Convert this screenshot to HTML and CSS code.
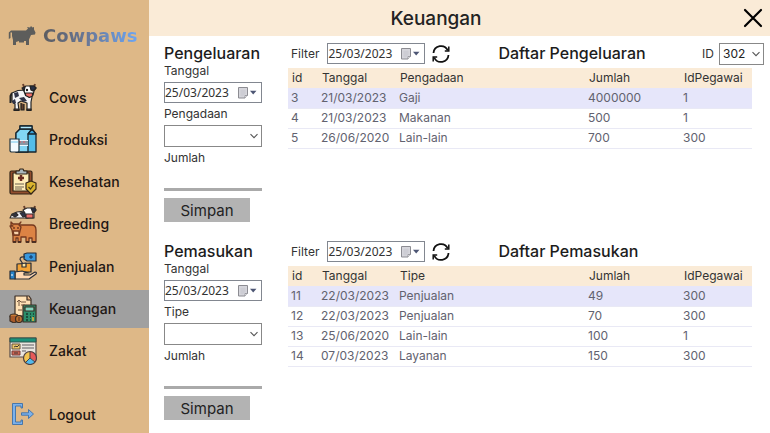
FILE: index.html
```html
<!DOCTYPE html>
<html lang="id">
<head>
<meta charset="utf-8">
<title>Cowpaws - Keuangan</title>
<link rel="stylesheet" href="styles.css">
</head>
<body>
<svg class="sprite" aria-hidden="true">
  <symbol id="chevron" viewBox="0 0 10 10"><path d="M1.5 3.2 5 6.7l3.5-3.5" fill="none" stroke="#555" stroke-width="1.1"/></symbol>
  <symbol id="calendar" viewBox="0 0 20 12"><path d="M1.500 .5h9v8l-2.500 2.500H1.500z" fill="#d6d6dc" stroke="#8c8c92"/><path d="M3 4h6M3 6h6M3 8h4M5 2.500v7M7 2.500v6" stroke="#c0c0c8" stroke-width=".5"/><path d="M10.500 8.500H8V11" fill="#fff" stroke="#8c8c92" stroke-width=".8"/><path d="M13 3.800h6.500L16.200 7.500z" fill="#4d5674"/></symbol>
  <symbol id="refresh" viewBox="0 0 18 18"><path d="M1.500 8A7.500 7.500 0 0 1 15.800 5.500M16.500 10A7.500 7.500 0 0 1 2.200 12.500" fill="none" stroke="#111" stroke-width="1.800"/><path d="M16.800 1.500v4.500h-4M1.200 16.500V12h4" fill="none" stroke="#111" stroke-width="1.500"/></symbol>
</svg>
<div class="app">
  <aside class="sidebar">
    <div class="brand">
      <svg class="brand-icon" viewBox="0 0 28 20" aria-hidden="true"><path d="M3 4.500h15l2-2-1-1.500 3 .5L23 0l1.500 1.500L26 1v2.500l1.500 3-.5 2-4 .5-2 4.500V19h-3v-4h-7l-3 1v3H5v-5l-1-4V6.500H2.500V12L.8 13V6.500z" fill="#5d5d5b"/><path d="M11 15.500h5" stroke="#5d5d5b" stroke-width="2"/></svg>
      <span class="brand-name">Cowpaws</span>
    </div>
    <nav class="nav">
      <a class="nav-item" href="#cows">
        <svg class="nav-icon" viewBox="0 0 28 28" aria-hidden="true"><g stroke="#222" stroke-width="1.200" stroke-linejoin="round"><path d="M3 10 1.500 13v7" fill="none" stroke-width="2"/><path d="M3 10 9 7.500l8-.5 6 7-1 5v8h-4v-7l-6-2-3 2 1 7H6v-6l-3-3z" fill="#f5f5f7"/><path d="M15 4l-1-3M25 4l1-3" stroke="#68412d" stroke-width="2"/><path d="M14 5l3-2h7l3 2-2 3-1 4-4 2-4-3-1-3z" fill="#fff"/><path d="M21 3h4l2 2-3 3-2-1zM13 5l3-1-1 4z" fill="#273047"/><path d="M16.500 10h7v3l-3 1.500-4-2z" fill="#ed6d68"/><path d="M5 10l4-1 1 4-4 2zM10 15l5-1 3 4-4 1zM3 18l3-2 1 4-3 1z" fill="#303448" stroke="none"/><path d="M5 26h5v1.500H5zM18 26h4v1.500h-4zM12 20v7h3v-6" fill="#60402f"/><circle cx="18" cy="7" r=".6"/></g></svg>
        <span>Cows</span></a>
      <a class="nav-item" href="#produksi">
        <svg class="nav-icon" viewBox="0 0 28 28" aria-hidden="true"><g stroke="#17242d" stroke-width="1.300" stroke-linejoin="round"><path d="M7 8l4-4V1h12v3l4 5v18H7z" fill="#53bce8"/><path d="M7 8l4-4h12l-4 5v18H7z" fill="#83d6f4"/><path d="M19 9h8l-4-5z" fill="#3aa2d8"/><path d="M11 1h12v3H11z" fill="#b2eaff"/></g><path d="M9 15h10v6H9z" fill="#eaf7ff"/><path d="M10 16v4m2-4v4m2-4v4m2-4v4m2-4v4" stroke="#27394b"/><path d="M11 16v2m4-2v2" stroke="#e75b67"/><path d="M1 14h9v12l-1 1H2l-1-1z" fill="#f4fbff" stroke="#20333e" stroke-width="1.200"/><path d="M2 17h7" stroke="#72c7ed"/></svg>
        <span>Produksi</span></a>
      <a class="nav-item" href="#kesehatan">
        <svg class="nav-icon" viewBox="0 0 28 28" aria-hidden="true"><g stroke="#322417" stroke-width="1.200" stroke-linejoin="round"><rect x="1" y="3" width="22" height="23" rx="1.500" fill="#924e2e"/><path d="M4 5h16v18H4z" fill="#ffedb7"/><path d="M7 3h3l1-2h3l1 2h3v3H7z" fill="#aab7bc"/><path d="M17 15l5-2 5 2v6l-5 5-5-5z" fill="#d9b32f"/></g><path d="M12 7v6M9 10h6" stroke="#6b2d22" stroke-width="2.500"/><path d="M6 16h9M6 19h9M6 21h7" stroke="#6d6250" stroke-width="1.200"/><path d="M19.500 19l2 2 3-4" fill="none" stroke="#453b18" stroke-width="1.200"/></svg>
        <span>Kesehatan</span></a>
      <a class="nav-item" href="#breeding">
        <svg class="nav-icon nav-icon-tall" viewBox="0 0 28 40" aria-hidden="true"><g stroke="#2c2929" stroke-width="1.100" stroke-linejoin="round"><path d="M1 14l2-4 5-2 8-1 3 7z" fill="#f2f2f6"/><path d="M3 11l4-2 2 2-3 2zM11 9l5-1 1 4-3 1z" fill="#303448"/><path d="M16 5l-1-3M25 5l1-3" stroke="#68412d" stroke-width="2"/><path d="M14 6l4-2h5l4 2-2 3v5h-8l-1-5z" fill="#fff"/><path d="M22 4h4l1 2-3 3z" fill="#273047"/><path d="M17 10h7v4h-7z" fill="#ec6c68"/></g><g fill="#dc8344" stroke="#75391f" stroke-width="1.300" stroke-linejoin="round"><path d="M6 21h17q4 0 4 5v12h-4v-4h-3v4h-3v-5h-5v5H9v-4H7v4H4v-9z"/><path d="M2 18v3l2 1H1l2 4 1 5h6l2-8-2-2 2-3-2 2H4z"/><path d="M4 27h6v4H5z" fill="#f8d2aa"/><circle cx="5" cy="24" r=".4"/><circle cx="9" cy="24" r=".4"/></g><path d="M4 38h3m2 0h3m5 0h3m3 0h4" stroke="#3a261f" stroke-width="1.500"/></svg>
        <span>Breeding</span></a>
      <a class="nav-item" href="#penjualan">
        <svg class="nav-icon" viewBox="0 0 28 28" aria-hidden="true"><g stroke="#282e38" stroke-width="1.200" stroke-linejoin="round"><path d="M15 2l3-1h9v8h-9l-3-2z" fill="#3997dc"/><path d="M16 5c-5-1-6 2-4 4l2 3" fill="none"/><path d="M8 12l14-1v9H8z" fill="#f3a335"/><path d="M13 11.500l4-.5v4h-4z" fill="#ffe39a"/><path d="M6 20l7-1 7 2h-5v2h6l5-3q2 0 1 2l-7 5H6z" fill="#ffd7b1"/><path d="M1 19h5v8H1z" fill="#2983ca"/></g><path d="M22 3v4m-2-2h4" stroke="#14345c"/><path d="M3 22v2" stroke="#fff"/></svg>
        <span>Penjualan</span></a>
      <a class="nav-item nav-item-active" href="#keuangan" aria-current="page">
        <svg class="nav-icon" viewBox="0 0 28 28" aria-hidden="true"><g stroke="#3b2d24" stroke-width="1.200" stroke-linejoin="round"><path d="M6 1h14l2 3v17H6V5z" fill="#ffe1b5"/><path d="M18 1v4h4" fill="#dda574"/><path d="M14 10h13v17H14z" fill="#2b8d6a"/><path d="M16 12h9v4h-9z" fill="#83d5bd"/><ellipse cx="5" cy="21" rx="4" ry="2" fill="#c87b35"/><path d="M1 21v5l4 2 4-2v-5" fill="#a85a2a"/><circle cx="10" cy="24" r="3.500" fill="#bd7032"/></g><path d="M10 5v6m-2-4 2-2 2 2M12 7h5m-5 3h4M9 15h4" fill="none" stroke="#725641"/><path d="M17 19h2m2 0h1m2 0h1M17 22h2m2 0h1m2 0h1M17 25h2m2 0h1" stroke="#18372e" stroke-width="1.700"/><path d="M24 22v4" stroke="#e7b43c" stroke-width="1.500"/><path d="M10 22v4" stroke="#542f1b"/></svg>
        <span>Keuangan</span></a>
      <a class="nav-item" href="#zakat">
        <svg class="nav-icon" viewBox="0 0 28 28" aria-hidden="true"><path d="M1 1h26v19H1z" fill="#e9e5df" stroke="#554b4a" stroke-width="1.200"/><path d="M1 1h26v4H1z" fill="#1b927b" stroke="#30544c"/><path d="M3 7h8v5H3z" fill="#ecc76b" stroke="#69543b"/><path d="M3 14h8v4H3z" fill="#cf6754" stroke="#783c38"/><path d="M5 10l2-1 1 1 2-2M5 16h4" fill="none" stroke="#3c3733"/><path d="M13 8h12M13 11h12M13 14h4" stroke="#8c8b8d" stroke-width="1.500"/><circle cx="21" cy="21" r="6.500" fill="#f2c451"/><path d="M21 21v-6.500a6.500 6.500 0 0 1 5.500 10z" fill="#e75959"/><path d="M21 21l5.500 3.500a6.500 6.500 0 0 1-10 1z" fill="#52b9ec"/><path d="M21 14.500V21l5 4M21 21l-5 5" fill="none" stroke="#4b3f41"/><circle cx="21" cy="21" r="6.500" fill="none" stroke="#4b3f41" stroke-width="1.200"/></svg>
        <span>Zakat</span></a>
    </nav>
    <a class="nav-item" href="#logout">
      <svg class="nav-icon" viewBox="0 0 28 28" aria-hidden="true"><g fill="#7cb1ea" stroke="#3b6fa9" stroke-width=".9"><path d="M3.500 3.500h10V8H12V6H6.500v16H12v-2h1.500v4.500h-10z"/><path d="M12.500 12.800h7V9.500l5 4.500-5 4.500v-3.300h-7z"/></g></svg>
      <span>Logout</span></a>
  </aside>
  <main class="main">
    <header class="header">
      <h1 class="header-title">Keuangan</h1>
      <button class="close" type="button" aria-label="Tutup"><svg class="close-icon" viewBox="0 0 20 20"><path d="M2 2l16 16M18 2 2 18" stroke="#000" stroke-width="2.200" stroke-linecap="round"/></svg></button>
    </header>
    <div class="sections">
      <section class="section">
        <form class="entry">
          <h2 class="title">Pengeluaran</h2>
          <label class="label" for="out-date">Tanggal</label>
          <div class="date"><input class="date-input" id="out-date" type="text" value="25/03/2023"><button class="date-button" type="button" aria-label="Pilih tanggal"><svg class="date-icon"><use href="#calendar"/></svg></button></div>
          <label class="label" for="out-kind">Pengadaan</label>
          <div class="pick"><select class="pick-select" id="out-kind"><option></option><option>Gaji</option><option>Makanan</option><option>Lain-lain</option></select><svg class="pick-icon"><use href="#chevron"/></svg></div>
          <label class="label" for="out-sum">Jumlah</label>
          <input class="amount" id="out-sum" type="text">
          <button class="save" type="button">Simpan</button>
        </form>
        <div class="report">
          <div class="toolbar">
            <label class="filter-label" for="out-filter">Filter</label>
            <div class="date"><input class="date-input" id="out-filter" type="text" value="25/03/2023"><button class="date-button" type="button" aria-label="Pilih tanggal"><svg class="date-icon"><use href="#calendar"/></svg></button></div>
            <button class="refresh" type="button" aria-label="Muat ulang"><svg class="refresh-icon"><use href="#refresh"/></svg></button>
            <h2 class="title">Daftar Pengeluaran</h2>
            <div class="staff"><label class="filter-label" for="staff">ID</label>
              <div class="pick pick-small"><select class="pick-select" id="staff"><option>302</option><option>300</option></select><svg class="pick-icon"><use href="#chevron"/></svg></div></div>
          </div>
          <table class="table">
            <colgroup><col class="col-id"><col class="col-date"><col class="col-kind"><col class="col-sum"><col class="col-staff"></colgroup>
            <thead><tr><th>id</th><th>Tanggal</th><th>Pengadaan</th><th>Jumlah</th><th>IdPegawai</th></tr></thead>
            <tbody>
              <tr class="selected"><td>3</td><td>21/03/2023</td><td>Gaji</td><td>4000000</td><td>1</td></tr>
              <tr><td>4</td><td>21/03/2023</td><td>Makanan</td><td>500</td><td>1</td></tr>
              <tr><td>5</td><td>26/06/2020</td><td>Lain-lain</td><td>700</td><td>300</td></tr>
            </tbody>
          </table>
        </div>
      </section>
      <section class="section">
        <form class="entry">
          <h2 class="title">Pemasukan</h2>
          <label class="label" for="in-date">Tanggal</label>
          <div class="date"><input class="date-input" id="in-date" type="text" value="25/03/2023"><button class="date-button" type="button" aria-label="Pilih tanggal"><svg class="date-icon"><use href="#calendar"/></svg></button></div>
          <label class="label" for="in-kind">Tipe</label>
          <div class="pick"><select class="pick-select" id="in-kind"><option></option><option>Penjualan</option><option>Layanan</option><option>Lain-lain</option></select><svg class="pick-icon"><use href="#chevron"/></svg></div>
          <label class="label" for="in-sum">Jumlah</label>
          <input class="amount" id="in-sum" type="text">
          <button class="save" type="button">Simpan</button>
        </form>
        <div class="report">
          <div class="toolbar">
            <label class="filter-label" for="in-filter">Filter</label>
            <div class="date"><input class="date-input" id="in-filter" type="text" value="25/03/2023"><button class="date-button" type="button" aria-label="Pilih tanggal"><svg class="date-icon"><use href="#calendar"/></svg></button></div>
            <button class="refresh" type="button" aria-label="Muat ulang"><svg class="refresh-icon"><use href="#refresh"/></svg></button>
            <h2 class="title">Daftar Pemasukan</h2>
          </div>
          <table class="table">
            <colgroup><col class="col-id"><col class="col-date"><col class="col-kind"><col class="col-sum"><col class="col-staff"></colgroup>
            <thead><tr><th>id</th><th>Tanggal</th><th>Tipe</th><th>Jumlah</th><th>IdPegawai</th></tr></thead>
            <tbody>
              <tr class="selected"><td>11</td><td>22/03/2023</td><td>Penjualan</td><td>49</td><td>300</td></tr>
              <tr><td>12</td><td>22/03/2023</td><td>Penjualan</td><td>70</td><td>300</td></tr>
              <tr><td>13</td><td>25/06/2020</td><td>Lain-lain</td><td>100</td><td>1</td></tr>
              <tr><td>14</td><td>07/03/2023</td><td>Layanan</td><td>150</td><td>300</td></tr>
            </tbody>
          </table>
        </div>
      </section>
    </div>
  </main>
</div>
</body>
</html>
```
FILE: styles.css
```css
* { box-sizing: border-box; }

body {
  margin: 0;
  background: #fff;
  color: #222;
  font-family: Inter, "Liberation Sans", sans-serif;
  font-size: 12px;
}

h1, h2 { margin: 0; font-weight: 500; }
button, input, select { margin: 0; padding: 0; border: 0; border-radius: 0; color: inherit; font: inherit; }
button { background: none; cursor: pointer; }
svg { display: block; }

.sprite { position: absolute; width: 0; height: 0; }

.app { display: flex; min-height: 100vh; }

/* Sidebar */
.sidebar {
  display: flex;
  flex: none;
  flex-direction: column;
  width: 149px;
  background: #deb887;
}

.brand { display: flex; align-items: center; gap: 7px; height: 78px; padding: 0 0 6px 8px; }
.brand-icon { width: 28px; height: 20px; }
.brand-name {
  background: linear-gradient(90deg, #5c5c60, #6a7a9c 50%, #6ca6f4);
  background-clip: text;
  -webkit-background-clip: text;
  color: transparent;
  font: bold 18px/24px "DejaVu Sans", sans-serif;
}

.nav { display: flex; flex: 1; flex-direction: column; justify-content: space-between; margin-bottom: 25px; }
.nav-item {
  display: flex;
  align-items: center;
  gap: 12px;
  height: 38px;
  padding-left: 9px;
  color: #1e1714;
  font-size: 14px;
  font-weight: 500;
  text-decoration: none;
}
.nav-item-active { background: #a0a0a0; }
.nav-icon { width: 28px; height: 28px; }
.nav-icon-tall { height: 40px; }

/* Page header */
.main { flex: 1; min-width: 0; }
.header { display: flex; align-items: center; height: 36px; background: #faebd7; }
.header-title { flex: 1; font-size: 19px; text-align: center; }
.close { display: flex; justify-content: flex-end; width: 47px; padding-right: 7px; }
.close-icon { width: 20px; height: 20px; }

/* Sections */
.sections { display: grid; gap: 19px; padding: 7px 6px 11px 15px; }
.section { display: flex; gap: 26px; }
.title { color: #1c1c1c; font-size: 16px; line-height: 21px; white-space: nowrap; }

.entry { display: flex; flex: none; flex-direction: column; gap: 4px; width: 98px; }
.entry .title { margin-bottom: -4px; }
.label { color: #333; line-height: 14px; }

.date { display: flex; align-items: center; width: 98px; height: 21px; border: 1px solid #828790; background: #fff; }
.date-input { flex: 1; width: 0; min-width: 0; color: #333; font: 12px/18px "Noto Sans", sans-serif; }
.date-button { flex: none; margin-right: 4px; }
.date-icon { width: 20px; height: 12px; }

.pick { display: grid; align-items: center; }
.pick > * { grid-area: 1 / 1; }
.pick-select { width: 100%; height: 22px; padding-left: 3px; border: 1px solid #888; background: #fff; appearance: none; }
.pick-icon { justify-self: end; width: 10px; height: 10px; margin-right: 3px; pointer-events: none; }
.pick-small { width: 45px; }

.amount { height: 22px; border-bottom: 3px solid #aaa; background: transparent; }
.save { width: 86px; height: 24px; margin-top: 3px; background: #b3b3b3; color: #222; font-size: 15px; }

/* Report */
.report { flex: 1; min-width: 0; }
.toolbar { display: flex; align-items: center; height: 21px; margin-bottom: 4px; padding-left: 3px; }
.toolbar .date { margin: 0 7px 0 8px; flex: none; }
.toolbar .title { margin-left: 48px; }
.filter-label { color: #333; }
.refresh-icon { width: 18px; height: 18px; }
.staff { display: flex; align-items: center; gap: 5px; margin-left: auto; }

.table { width: calc(100% - 12px); border-collapse: collapse; table-layout: fixed; }
.table th, .table td { height: 20px; padding: 0 0 0 3px; overflow: hidden; line-height: 18px; text-align: left; white-space: nowrap; }
.table th { padding-left: 4px; background: #faebd7; color: #333; font-weight: 400; }
.table td { border-bottom: 1px solid #e9e9f5; color: #62626f; }
.table .selected td { background: #e6e6fa; }
.col-id { width: 30px; }
.col-date { width: 78px; }
.col-sum { width: 95px; }
.col-staff { width: 72px; }
```
